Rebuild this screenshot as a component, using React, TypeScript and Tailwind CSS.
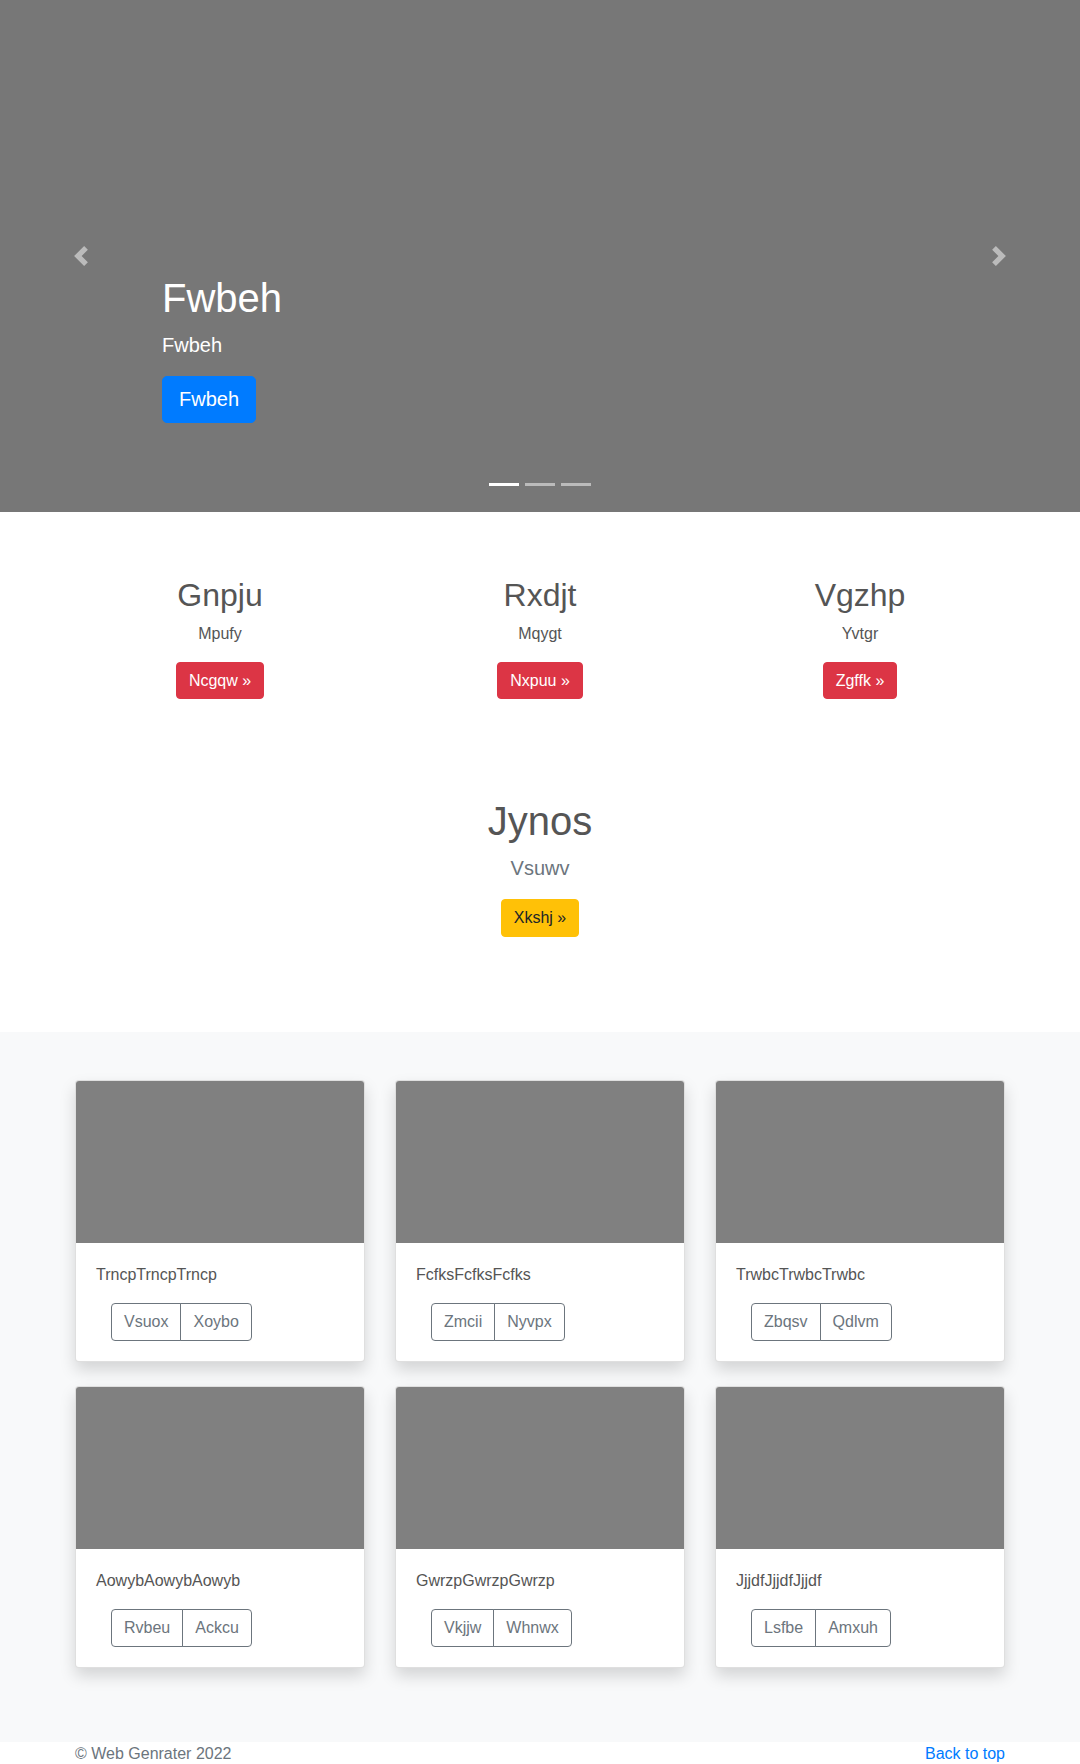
import React from 'react';

const features = [
  { title: 'Gnpju', text: 'Mpufy', button: 'Ncgqw' },
  { title: 'Rxdjt', text: 'Mqygt', button: 'Nxpuu' },
  { title: 'Vgzhp', text: 'Yvtgr', button: 'Zgffk' },
];

const cards = [
  { text: 'TrncpTrncpTrncp', a: 'Vsuox', b: 'Xoybo' },
  { text: 'FcfksFcfksFcfks', a: 'Zmcii', b: 'Nyvpx' },
  { text: 'TrwbcTrwbcTrwbc', a: 'Zbqsv', b: 'Qdlvm' },
  { text: 'AowybAowybAowyb', a: 'Rvbeu', b: 'Ackcu' },
  { text: 'GwrzpGwrzpGwrzp', a: 'Vkjjw', b: 'Whnwx' },
  { text: 'JjjdfJjjdfJjjdf', a: 'Lsfbe', b: 'Amxuh' },
];

function Chevron({ dir }: { dir: 'left' | 'right' }) {
  return (
    <svg width="20" height="20" viewBox="0 0 8 8" fill="#fff">
      {dir === 'left' ? (
        <path d="M5.25 0l-4 4 4 4 1.5-1.5-2.5-2.5 2.5-2.5-1.5-1.5z" />
      ) : (
        <path d="M2.75 0l-1.5 1.5 2.5 2.5-2.5 2.5 1.5 1.5 4-4-4-4z" />
      )}
    </svg>
  );
}

function Carousel() {
  return (
    <div className="relative h-[512px] bg-[#777777]">
      {/* caption */}
      <div className="pl-[162px] pt-[274px] text-white">
        <h1 className="text-[40px] leading-[48px] font-medium mb-2">Fwbeh</h1>
        <p className="text-[20px] leading-[30px] mb-4">Fwbeh</p>
        <a className="inline-block bg-[#007bff] border border-[#007bff] rounded-[5px] px-4 py-2 text-[20px] leading-[29px] text-white">
          Fwbeh
        </a>
      </div>

      {/* controls */}
      <div className="absolute left-0 top-0 h-full w-[15%] flex items-center justify-center opacity-50">
        <Chevron dir="left" />
      </div>
      <div className="absolute right-0 top-0 h-full w-[15%] flex items-center justify-center opacity-50">
        <Chevron dir="right" />
      </div>

      {/* indicators */}
      <div className="absolute bottom-[26px] left-0 right-0 flex justify-center">
        <span className="w-[30px] h-[3px] mx-[3px] bg-white" />
        <span className="w-[30px] h-[3px] mx-[3px] bg-white opacity-50" />
        <span className="w-[30px] h-[3px] mx-[3px] bg-white opacity-50" />
      </div>
    </div>
  );
}

function Marketing() {
  return (
    <div className="w-[960px] mx-auto px-[15px] pt-[64px] pb-[95px]">
      <div className="grid grid-cols-3 gap-x-[30px]">
        {features.map((f) => (
          <div key={f.title} className="text-center">
            <h2 className="text-[32px] leading-[38px] font-medium text-[#555] mb-2">{f.title}</h2>
            <p className="text-[16px] leading-6 text-[#555] mb-4">{f.text}</p>
            <a className="inline-block bg-[#dc3545] border border-[#dc3545] rounded-[4px] px-3 py-[6px] text-[16px] leading-[23px] text-white">
              {f.button} »
            </a>
          </div>
        ))}
      </div>

      <div className="text-center mt-[98px]">
        <h1 className="text-[40px] leading-[48px] font-medium text-[#555] mb-2">Jynos</h1>
        <p className="text-[20px] leading-[30px] font-light text-[#6c757d] mb-4">Vsuwv</p>
        <a className="inline-block bg-[#ffc107] border border-[#ffc107] rounded-[4px] px-3 py-[6px] text-[16px] leading-6 text-[#212529]">
          Xkshj »
        </a>
      </div>
    </div>
  );
}

function Album() {
  return (
    <div className="bg-[#f8f9fa] pt-12 pb-[74px]">
      <div className="w-[960px] mx-auto px-[15px] grid grid-cols-3 gap-x-[30px] gap-y-6">
        {cards.map((c) => (
          <div
            key={c.text}
            className="bg-white border border-[rgba(0,0,0,0.125)] rounded-[4px] overflow-hidden shadow-[0_8px_16px_rgba(0,0,0,0.15)]"
          >
            <div className="h-[162px] bg-[#808080]" />
            <div className="p-5">
              <p className="text-[16px] leading-6 text-[#555] mb-4">{c.text}</p>
              <div className="inline-flex ml-[15px]">
                <span className="border border-[#6c757d] rounded-l-[4px] px-3 py-[6px] text-[16px] leading-6 text-[#6c757d]">
                  {c.a}
                </span>
                <span className="border border-[#6c757d] -ml-px rounded-r-[4px] px-3 py-[6px] text-[16px] leading-6 text-[#6c757d]">
                  {c.b}
                </span>
              </div>
            </div>
          </div>
        ))}
      </div>
    </div>
  );
}

export default function App() {
  return (
    <div className="font-['Liberation_Sans',Arial,sans-serif] bg-white min-h-[1764px]">
      <Carousel />
      <Marketing />
      <Album />
      <footer className="w-[960px] mx-auto px-[15px] flex justify-between text-[16px] leading-6">
        <p className="text-[#6c757d]">© Web Genrater 2022</p>
        <a className="text-[#007bff]">Back to top</a>
      </footer>
    </div>
  );
}
